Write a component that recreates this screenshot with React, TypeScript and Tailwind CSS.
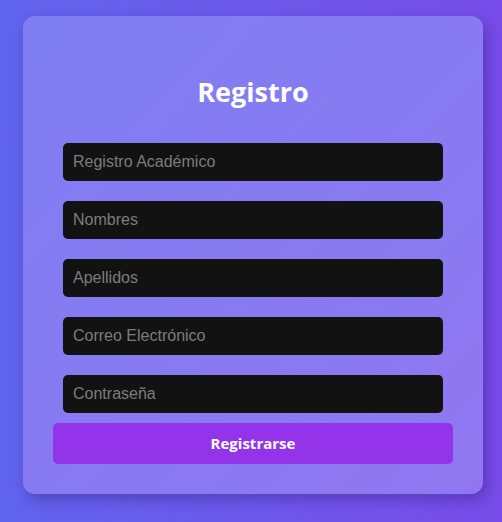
import React from 'react';

const fields = [
  { name: 'registro', placeholder: 'Registro Académico', type: 'text' },
  { name: 'nombres', placeholder: 'Nombres', type: 'text' },
  { name: 'apellidos', placeholder: 'Apellidos', type: 'text' },
  { name: 'correo', placeholder: 'Correo Electrónico', type: 'email' },
  { name: 'password', placeholder: 'Contraseña', type: 'password' },
];

export default function App() {
  return (
    <div className="min-h-screen w-full bg-gradient-to-r from-[#6064ee] to-[#784ce8] pt-[16px] pl-[23px] pr-[19px] pb-[29px]">
      {/* Card */}
      <div className="w-[460px] rounded-xl bg-gradient-to-br from-[#7f7ef3] to-[#9077f0] p-[30px] shadow-[4px_6px_14px_rgba(40,20,110,0.35)]">
        <h2 className="mt-[26px] mb-[21px] text-center text-[27px] leading-[40px] font-bold text-white font-['Open_Sans',sans-serif]">
          Registro
        </h2>

        <form className="flex flex-col" onSubmit={(e) => e.preventDefault()}>
          {fields.map((f) => (
            <input
              key={f.name}
              name={f.name}
              type={f.type}
              placeholder={f.placeholder}
              className="mx-[10px] my-[10px] h-[38px] rounded-[5px] bg-[#121212] px-[10px] text-[16px] text-white placeholder:text-[#7c7c7c] outline-none font-['Liberation_Sans',Arial,sans-serif]"
            />
          ))}
          <button
            type="submit"
            className="h-[41px] w-full rounded-[5px] bg-[#9333ea] text-[15px] font-bold text-white font-['Open_Sans',sans-serif]"
          >
            Registrarse
          </button>
        </form>
      </div>
    </div>
  );
}
